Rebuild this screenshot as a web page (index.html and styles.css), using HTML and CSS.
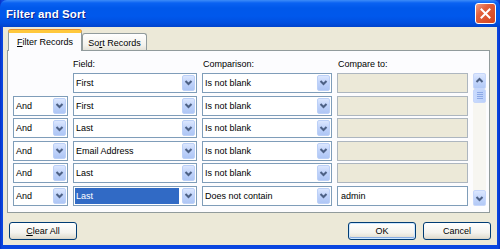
FILE: index.html
```html
<!DOCTYPE html>
<html>
<head>
<meta charset="utf-8">
<link rel="stylesheet" href="styles.css">
</head>
<body>
<div class="window">
  <div class="titlebar">
    <span class="title">Filter and Sort</span>
    <div class="close"><svg width="19" height="19" viewBox="0 0 19 19"><path d="M5.5 5.5 L13.5 13.5 M13.5 5.5 L5.5 13.5" stroke="#fff" stroke-width="2" stroke-linecap="square"/></svg></div>
  </div>
  <div class="client">
    <div class="tabs">
      <div class="tab active"><u>F</u>ilter Records</div>
      <div class="tab">So<u>r</u>t Records</div>
    </div>
    <div class="panel">
      <div class="grid">
        <div class="hdr c2">Field:</div>
        <div class="hdr c3">Comparison:</div>
        <div class="hdr c4">Compare to:</div>

        <div class="combo c2"><div class="val">First</div><div class="dd"><svg width="11" height="15" viewBox="0 0 11 15"><polyline points="2.5,6 5.5,9 8.5,6" fill="none" stroke="#4D6185" stroke-width="2"/></svg></div></div>
        <div class="combo c3"><div class="val">Is not blank</div><div class="dd"><svg width="11" height="15" viewBox="0 0 11 15"><polyline points="2.5,6 5.5,9 8.5,6" fill="none" stroke="#4D6185" stroke-width="2"/></svg></div></div>
        <div class="tb dis c4"></div>

        <div class="combo c1"><div class="val">And</div><div class="dd"><svg width="11" height="15" viewBox="0 0 11 15"><polyline points="2.5,6 5.5,9 8.5,6" fill="none" stroke="#4D6185" stroke-width="2"/></svg></div></div>
        <div class="combo c2"><div class="val">First</div><div class="dd"><svg width="11" height="15" viewBox="0 0 11 15"><polyline points="2.5,6 5.5,9 8.5,6" fill="none" stroke="#4D6185" stroke-width="2"/></svg></div></div>
        <div class="combo c3"><div class="val">Is not blank</div><div class="dd"><svg width="11" height="15" viewBox="0 0 11 15"><polyline points="2.5,6 5.5,9 8.5,6" fill="none" stroke="#4D6185" stroke-width="2"/></svg></div></div>
        <div class="tb dis c4"></div>

        <div class="combo c1"><div class="val">And</div><div class="dd"><svg width="11" height="15" viewBox="0 0 11 15"><polyline points="2.5,6 5.5,9 8.5,6" fill="none" stroke="#4D6185" stroke-width="2"/></svg></div></div>
        <div class="combo c2"><div class="val">Last</div><div class="dd"><svg width="11" height="15" viewBox="0 0 11 15"><polyline points="2.5,6 5.5,9 8.5,6" fill="none" stroke="#4D6185" stroke-width="2"/></svg></div></div>
        <div class="combo c3"><div class="val">Is not blank</div><div class="dd"><svg width="11" height="15" viewBox="0 0 11 15"><polyline points="2.5,6 5.5,9 8.5,6" fill="none" stroke="#4D6185" stroke-width="2"/></svg></div></div>
        <div class="tb dis c4"></div>

        <div class="combo c1"><div class="val">And</div><div class="dd"><svg width="11" height="15" viewBox="0 0 11 15"><polyline points="2.5,6 5.5,9 8.5,6" fill="none" stroke="#4D6185" stroke-width="2"/></svg></div></div>
        <div class="combo c2"><div class="val">Email Address</div><div class="dd"><svg width="11" height="15" viewBox="0 0 11 15"><polyline points="2.5,6 5.5,9 8.5,6" fill="none" stroke="#4D6185" stroke-width="2"/></svg></div></div>
        <div class="combo c3"><div class="val">Is not blank</div><div class="dd"><svg width="11" height="15" viewBox="0 0 11 15"><polyline points="2.5,6 5.5,9 8.5,6" fill="none" stroke="#4D6185" stroke-width="2"/></svg></div></div>
        <div class="tb dis c4"></div>

        <div class="combo c1"><div class="val">And</div><div class="dd"><svg width="11" height="15" viewBox="0 0 11 15"><polyline points="2.5,6 5.5,9 8.5,6" fill="none" stroke="#4D6185" stroke-width="2"/></svg></div></div>
        <div class="combo c2"><div class="val">Last</div><div class="dd"><svg width="11" height="15" viewBox="0 0 11 15"><polyline points="2.5,6 5.5,9 8.5,6" fill="none" stroke="#4D6185" stroke-width="2"/></svg></div></div>
        <div class="combo c3"><div class="val">Is not blank</div><div class="dd"><svg width="11" height="15" viewBox="0 0 11 15"><polyline points="2.5,6 5.5,9 8.5,6" fill="none" stroke="#4D6185" stroke-width="2"/></svg></div></div>
        <div class="tb dis c4"></div>

        <div class="combo c1"><div class="val">And</div><div class="dd"><svg width="11" height="15" viewBox="0 0 11 15"><polyline points="2.5,6 5.5,9 8.5,6" fill="none" stroke="#4D6185" stroke-width="2"/></svg></div></div>
        <div class="combo c2"><div class="val sel">Last</div><div class="dd"><svg width="11" height="15" viewBox="0 0 11 15"><polyline points="2.5,6 5.5,9 8.5,6" fill="none" stroke="#4D6185" stroke-width="2"/></svg></div></div>
        <div class="combo c3"><div class="val">Does not contain</div><div class="dd"><svg width="11" height="15" viewBox="0 0 11 15"><polyline points="2.5,6 5.5,9 8.5,6" fill="none" stroke="#4D6185" stroke-width="2"/></svg></div></div>
        <div class="tb c4">admin</div>

        <div class="scrollbar">
          <div class="sbtn"><svg width="11" height="14" viewBox="0 0 11 14"><polyline points="2.5,8 5.5,5 8.5,8" fill="none" stroke="#4D6185" stroke-width="2"/></svg></div>
          <div class="thumb"><span></span><span></span><span></span><span></span></div>
          <div class="track"></div>
          <div class="sbtn"><svg width="11" height="14" viewBox="0 0 11 14"><polyline points="2.5,6 5.5,9 8.5,6" fill="none" stroke="#4D6185" stroke-width="2"/></svg></div>
        </div>
      </div>
    </div>
    <div class="buttons">
      <div class="btn clear"><u>C</u>lear All</div>
      <div class="btn ok">OK</div>
      <div class="btn">Cancel</div>
    </div>
  </div>
</div>
</body>
</html>
```
FILE: styles.css
```css
* { box-sizing: border-box; }
html, body { margin: 0; padding: 0; }
body {
  width: 500px;
  height: 249px;
  overflow: hidden;
  background: #0A3CD6;
  font-family: "Liberation Sans", Arial, sans-serif;
  font-size: 9px;
  color: #000;
}
.window {
  width: 500px;
  height: 249px;
  display: flex;
  flex-direction: column;
  background: linear-gradient(90deg, #0831C4 0, #0A46E0 2px, #0A46E0 498px, #0831C4 500px);
}
.titlebar {
  height: 27px;
  flex: none;
  display: flex;
  align-items: center;
  padding: 0 4px 0 6px;
  border-radius: 7px 7px 0 0;
  background: linear-gradient(#3D8CF8 0, #0A62F2 3px, #0058EA 8px, #0058EC 60%, #004FE0 85%, #0043CC 100%);
}
.title {
  color: #fff;
  font-weight: bold;
  font-size: 11.5px;
  text-shadow: 1px 1px 0 #0A1E8A;
  letter-spacing: 0.1px;
}
.close {
  margin-left: auto;
  width: 21px;
  height: 21px;
  border: 1px solid #fff;
  border-radius: 3px;
  background: linear-gradient(135deg, #F0A08A 0, #E2603C 35%, #D4441E 100%);
  display: flex;
  align-items: center;
  justify-content: center;
}
.client {
  flex: 1;
  margin: 0 3px 4px 3px;
  background: #ECE9D8;
  display: flex;
  flex-direction: column;
  padding: 3px 6px 5px 4px;
}
.tabs {
  height: 20px;
  flex: none;
  display: flex;
  align-items: flex-start;
  padding-left: 1px;
}
.tab {
  height: 17px;
  margin-top: 3px;
  width: 65px;
  border: 1px solid #919B9C;
  border-bottom: none;
  border-radius: 3px 3px 0 0;
  background: linear-gradient(#FFFFFF, #F3F2EC 70%, #E4E2D8);
  display: flex;
  align-items: center;
  justify-content: center;
  padding-top: 1px;
}
.tab.active {
  position: relative;
  z-index: 1;
  margin-top: 0;
  height: 21px;
  width: 74px;
  background: #FCFCFE;
  border-top: 3px solid #FFC83C;
  box-shadow: 0 -1px 0 #E68B2C;
  padding-top: 0;
}
.panel {
  height: 163px;
  flex: none;
  margin-right: 1px;
  border: 1px solid #919B9C;
  background: #FCFCFE;
  padding: 7.4px 0 0 5px;
}
.grid {
  display: grid;
  grid-template-columns: 55px 124px 130px 131px 13px;
  grid-template-rows: 12px repeat(6, 20px);
  column-gap: 5px;
  row-gap: 2.6px;
}
.c1 { grid-column: 1; }
.c2 { grid-column: 2; }
.c3 { grid-column: 3; }
.c4 { grid-column: 4; }
.hdr {
  grid-row: 1;
  line-height: 12px;
  padding-left: 0;
}
.hdr.c3 { padding-left: 1px; }
.hdr.c4 { padding-left: 1px; }
.combo {
  display: flex;
  border: 1px solid #7F9DB9;
  background: #fff;
  padding: 1px;
}
.val {
  flex: 1;
  display: flex;
  align-items: center;
  padding-left: 1px;
  white-space: nowrap;
  overflow: hidden;
}
.val.sel {
  background: #316AC5;
  color: #fff;
  margin-right: 3px;
}
.dd {
  width: 13px;
  flex: none;
  border: 1px solid #BCD0F7;
  border-radius: 2px;
  background: linear-gradient(#DCE7FE, #BFD2FA 50%, #AEC6F5);
  display: flex;
  align-items: center;
  justify-content: center;
}
.tb {
  border: 1px solid #7F9DB9;
  background: #fff;
  display: flex;
  align-items: center;
  padding-left: 3px;
}
.tb.dis {
  background: #ECE9D8;
  border-color: #ADB6BF;
}
.scrollbar {
  grid-column: 5;
  grid-row: 2 / 8;
  display: flex;
  flex-direction: column;
  background: #F7F6F1;
}
.sbtn {
  height: 16px;
  flex: none;
  border: 1px solid #C6D6FA;
  border-radius: 2px;
  background: linear-gradient(#DCE7FE, #C3D5FB 50%, #B2C9F6);
  display: flex;
  align-items: center;
  justify-content: center;
}
.thumb {
  height: 14px;
  flex: none;
  border: 1px solid #C6D6FA;
  border-radius: 2px;
  background: linear-gradient(90deg, #C9DAFD, #BBD0FA);
  display: flex;
  flex-direction: column;
  align-items: center;
  justify-content: center;
  gap: 1px;
}
.thumb span {
  display: block;
  width: 6px;
  height: 1px;
  background: #8CA8E6;
}
.track { flex: 1; }
.buttons {
  margin-top: 9px;
  height: 18px;
  display: flex;
  gap: 7px;
}
.btn {
  width: 68px;
  height: 18px;
  border: 1px solid #003C74;
  border-radius: 3px;
  background: linear-gradient(#FFFFFF, #F4F3EE 60%, #E3E0D4 90%, #D6D0C5);
  display: flex;
  align-items: center;
  justify-content: center;
}
.btn.clear { margin-left: 2px; margin-right: auto; }
.btn.ok {
  box-shadow: inset 0 0 0 1px #CEE7FF, inset 0 -1px 0 1px #89ADE4;
}
```
